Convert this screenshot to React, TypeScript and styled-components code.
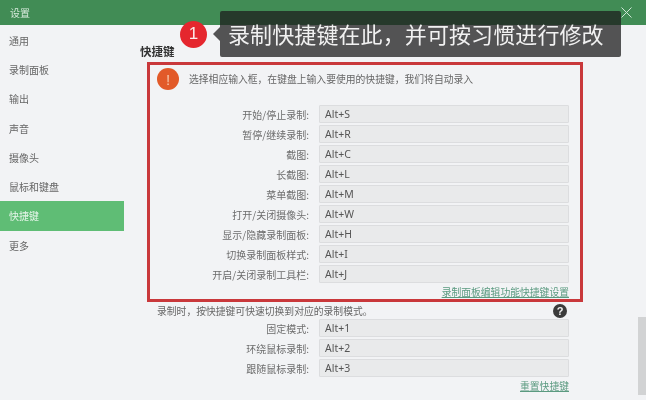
import React from 'react';
import styled, { createGlobalStyle } from 'styled-components';

const navItems = ['通用', '录制面板', '输出', '声音', '摄像头', '鼠标和键盘', '快捷键', '更多'];

const mainKeys = [
  ['开始/停止录制:', 'Alt+S'],
  ['暂停/继续录制:', 'Alt+R'],
  ['截图:', 'Alt+C'],
  ['长截图:', 'Alt+L'],
  ['菜单截图:', 'Alt+M'],
  ['打开/关闭摄像头:', 'Alt+W'],
  ['显示/隐藏录制面板:', 'Alt+H'],
  ['切换录制面板样式:', 'Alt+I'],
  ['开启/关闭录制工具栏:', 'Alt+J'],
];

const modeKeys = [
  ['固定模式:', 'Alt+1'],
  ['环绕鼠标录制:', 'Alt+2'],
  ['跟随鼠标录制:', 'Alt+3'],
];

const GlobalStyle = createGlobalStyle`
  html, body {
    margin: 0;
    padding: 0;
    background: #f2f3f5;
  }
  body {
    font-family: 'Noto Sans CJK SC', 'Noto Sans', sans-serif;
  }
`;

const Window = styled.div`
  position: relative;
  width: 646px;
  height: 400px;
  overflow: hidden;
  background: #f2f3f5;
  color: #666;
  filter: blur(0.45px);
`;

const TitleBar = styled.header`
  display: flex;
  align-items: center;
  justify-content: space-between;
  height: 25px;
  padding: 0 14px 0 10px;
  background: #418c55;
  color: #d8eadc;
  font-size: 10px;
`;

const Body = styled.div`
  display: flex;
`;

const Sidebar = styled.nav`
  display: flex;
  flex-direction: column;
  flex: none;
  width: 124px;
  padding-top: 0.5px;
`;

const NavItem = styled.div<{ $active?: boolean }>`
  display: flex;
  align-items: center;
  height: 29.3px;
  padding-left: 9px;
  font-size: 10px;
  background: ${(p) => (p.$active ? '#5fbd75' : 'transparent')};
  color: ${(p) => (p.$active ? '#e6f5ea' : '#666')};
`;

const Main = styled.main`
  flex: none;
  width: 445px;
  padding-left: 16px;
`;

const Heading = styled.h2`
  margin: 0;
  height: 37px;
  padding-top: 18px;
  box-sizing: border-box;
  font-size: 11.5px;
  line-height: 17px;
  font-weight: 700;
  color: #333;
`;

const RedBox = styled.section`
  box-sizing: border-box;
  width: 436px;
  height: 240px;
  margin-left: 7px;
  padding: 3px 10px 0 7px;
  border: 3px solid #c9383b;
`;

const Notice = styled.div`
  display: flex;
  align-items: center;
  gap: 10px;
  height: 22px;
  margin-bottom: 15px;
  font-size: 9.8px;
  color: #666;
`;

const WarnDot = styled.span`
  display: flex;
  align-items: center;
  justify-content: center;
  flex: none;
  width: 22px;
  height: 22px;
  border-radius: 50%;
  background: #e25a29;
  color: #f6c6a8;
  font-size: 15px;
  font-family: 'Liberation Sans', sans-serif;
`;

const Rows = styled.div`
  display: flex;
  flex-direction: column;
  gap: 2px;
`;

const Row = styled.div`
  display: grid;
  grid-template-columns: 152px 250px;
  column-gap: 10px;
  align-items: center;
  height: 18px;
`;

const Label = styled.span`
  text-align: right;
  font-size: 10px;
  color: #6c6c6c;
  white-space: nowrap;
`;

const KeyInput = styled.div`
  box-sizing: border-box;
  height: 18px;
  padding-left: 5px;
  line-height: 17px;
  font-family: 'Noto Sans', sans-serif;
  font-size: 10.5px;
  color: #555;
  background: #e9eaeb;
  border: 1px solid #dcdddf;
  border-radius: 1px;
`;

const LinkRow = styled.div`
  width: 412px;
  margin-top: 2px;
  text-align: right;
  font-size: 9.8px;
  line-height: 14px;
  color: #5b9a80;
  text-decoration: underline;
`;

const ModeSection = styled.section`
  margin-left: 17px;
`;

const ModeHint = styled.div`
  display: flex;
  align-items: center;
  justify-content: space-between;
  width: 410px;
  height: 17px;
  font-size: 9.8px;
  color: #666;
`;

const HelpDot = styled.span`
  display: flex;
  align-items: center;
  justify-content: center;
  width: 14px;
  height: 14px;
  border-radius: 50%;
  background: #3b3b3b;
  color: #f2f2f2;
  font-family: 'Liberation Sans', sans-serif;
  font-size: 11px;
  font-weight: 700;
`;

const Scrollbar = styled.div`
  position: absolute;
  left: 638px;
  top: 317px;
  width: 8px;
  height: 78px;
  background: #d2d3d4;
`;

const Callout = styled.div`
  position: absolute;
  left: 180px;
  top: 11px;
  display: flex;
  align-items: center;
`;

const Badge = styled.span`
  display: flex;
  align-items: center;
  justify-content: center;
  width: 27px;
  height: 27px;
  margin-right: 6px;
  border-radius: 50%;
  background: #e5262e;
  color: #fbe9e9;
  font-family: 'Liberation Sans', sans-serif;
  font-size: 17px;
`;

const Arrow = styled.span`
  width: 0;
  height: 0;
  border-top: 7px solid transparent;
  border-bottom: 7px solid transparent;
  border-right: 7px solid rgba(30, 30, 30, 0.75);
`;

const Bubble = styled.div`
  box-sizing: border-box;
  width: 401px;
  height: 46px;
  padding-left: 8px;
  line-height: 45px;
  border-radius: 2px;
  background: rgba(30, 30, 30, 0.75);
  color: #f1f1f1;
  font-size: 22px;
  letter-spacing: 0.1px;
  white-space: nowrap;
`;

export default function App() {
  return (
    <Window>
      <GlobalStyle />
      <TitleBar>
        <span>设置</span>
        <svg width="11" height="11" viewBox="0 0 11 11" fill="none" stroke="#cfe6d6" strokeWidth="1">
          <path d="M0.5 0.5 L10.5 10.5 M10.5 0.5 L0.5 10.5" />
        </svg>
      </TitleBar>
      <Body>
        <Sidebar>
          {navItems.map((item) => (
            <NavItem key={item} $active={item === '快捷键'}>{item}</NavItem>
          ))}
        </Sidebar>
        <Main>
          <Heading>快捷键</Heading>
          <RedBox>
            <Notice>
              <WarnDot>!</WarnDot>
              选择相应输入框，在键盘上输入要使用的快捷键，我们将自动录入
            </Notice>
            <Rows>
              {mainKeys.map(([label, value]) => (
                <Row key={value}>
                  <Label>{label}</Label>
                  <KeyInput>{value}</KeyInput>
                </Row>
              ))}
            </Rows>
            <LinkRow>录制面板编辑功能快捷键设置</LinkRow>
          </RedBox>
          <ModeSection>
            <ModeHint>
              录制时，按快捷键可快速切换到对应的录制模式。
              <HelpDot>?</HelpDot>
            </ModeHint>
            <Rows>
              {modeKeys.map(([label, value]) => (
                <Row key={value}>
                  <Label>{label}</Label>
                  <KeyInput>{value}</KeyInput>
                </Row>
              ))}
            </Rows>
            <LinkRow>重置快捷键</LinkRow>
          </ModeSection>
        </Main>
      </Body>
      <Scrollbar />
      <Callout>
        <Badge>1</Badge>
        <Arrow />
        <Bubble>录制快捷键在此，并可按习惯进行修改</Bubble>
      </Callout>
    </Window>
  );
}
